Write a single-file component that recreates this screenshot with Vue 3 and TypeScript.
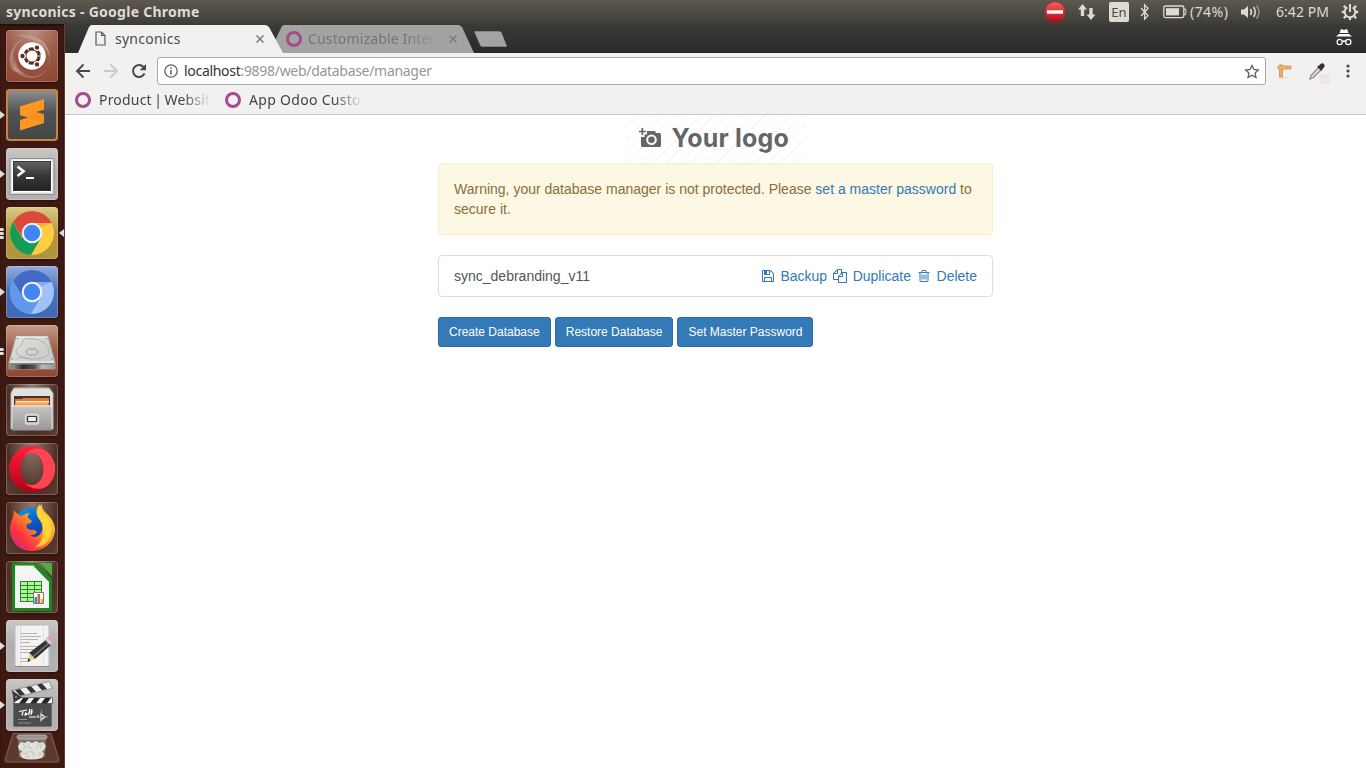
<script setup lang="ts">
interface Launcher {
  id: string
  tone: string
  left: number
  focused?: boolean
}

const launchers: Launcher[] = [
  { id: 'dash', tone: 'rust', left: 0 },
  { id: 'sublime', tone: 'slate', left: 1 },
  { id: 'terminal', tone: 'silver', left: 1 },
  { id: 'chrome', tone: 'gold', left: 3, focused: true },
  { id: 'chromium', tone: 'blue', left: 1 },
  { id: 'disk', tone: 'copper', left: 2 },
  { id: 'files', tone: 'brown', left: 0 },
  { id: 'opera', tone: 'brown', left: 0 },
  { id: 'firefox', tone: 'brown', left: 0 },
  { id: 'calc', tone: 'brown', left: 0 },
  { id: 'editor', tone: 'silver', left: 1 },
  { id: 'video', tone: 'silver', left: 1 },
]

const buttons: string[] = ['Create Database', 'Restore Database', 'Set Master Password']

const actions = [
  {
    label: 'Backup',
    path: 'M512 1536h768v-384h-768v384zm896 0h128v-896q0-14-10-38.5t-20-34.5l-281-281q-10-10-34-20t-39-10v416q0 40-28 68t-68 28h-576q-40 0-68-28t-28-68v-416h-128v1280h128v-416q0-40 28-68t68-28h832q40 0 68 28t28 68v416zm-384-928v-320q0-13-9.5-22.5t-22.5-9.5h-192q-13 0-22.5 9.5t-9.5 22.5v320q0 13 9.5 22.5t22.5 9.5h192q13 0 22.5-9.5t9.5-22.5zm640 32v928q0 40-28 68t-68 28h-1344q-40 0-68-28t-28-68v-1344q0-40 28-68t68-28h928q40 0 88 20t76 48l280 280q28 28 48 76t20 88z',
  },
  {
    label: 'Duplicate',
    path: 'M1696 384q40 0 68 28t28 68v1216q0 40-28 68t-68 28h-960q-40 0-68-28t-28-68v-288h-544q-40 0-68-28t-28-68v-672q0-40 20-88t48-76l408-408q28-28 76-48t88-20h416q40 0 68 28t28 68v328q68-40 128-40h416zm-544 213l-299 299h299v-299zm-640-384l-299 299h299v-299zm196 647l316-316v-416h-384v416q0 40-28 68t-68 28h-416v640h512v-256q0-40 20-88t48-76zm956 804v-1152h-384v416q0 40-28 68t-68 28h-416v640h896z',
  },
  {
    label: 'Delete',
    path: 'M704 736v576q0 14-9 23t-23 9h-64q-14 0-23-9t-9-23v-576q0-14 9-23t23-9h64q14 0 23 9t9 23zm256 0v576q0 14-9 23t-23 9h-64q-14 0-23-9t-9-23v-576q0-14 9-23t23-9h64q14 0 23 9t9 23zm256 0v576q0 14-9 23t-23 9h-64q-14 0-23-9t-9-23v-576q0-14 9-23t23-9h64q14 0 23 9t9 23zm128 724v-948h-896v948q0 22 7 40.5t14.5 27 10.5 8.5h832q3 0 10.5-8.5t14.5-27 7-40.5zm-672-1076h448l-48-117q-7-9-17-11h-317q-10 2-17 11zm928 32v64q0 14-9 23t-23 9h-96v948q0 83-47 143.5t-113 60.5h-832q-66 0-113-58.5t-47-141.5v-952h-96q-14 0-23-9t-9-23v-64q0-14 9-23t23-9h309l70-167q15-37 54-63t79-26h320q40 0 79 26t54 63l70 167h309q14 0 23 9t9 23z',
  },
]
</script>

<template>
  <div class="desktop">
    <header class="panel">
      <span class="panel-title">synconics - Google Chrome</span>
      <div class="tray">
        <svg class="t-stop" width="22" height="22" viewBox="0 0 22 22">
          <defs><linearGradient id="stopg" x1="0" y1="0" x2="0" y2="1"><stop offset="0" stop-color="#ef6a5c" /><stop offset=".5" stop-color="#d93035" /><stop offset="1" stop-color="#ad0a16" /></linearGradient></defs>
          <circle cx="11" cy="11" r="10.3" fill="url(#stopg)" stroke="#a5222a" stroke-width=".7" />
          <rect x="3" y="9.3" width="16" height="3.4" fill="#fff" />
        </svg>
        <svg class="t-net" width="18" height="18" viewBox="0 0 18 18" fill="#dfdbd2"><path d="M0 6.500 4.500 1 9 6.500H6.200V13H2.800V6.500zM8.500 11.500h2.800V5h3.400v6.500h2.800L13 17z" /></svg>
        <span class="t-lang">En</span>
        <svg class="t-bt" width="10" height="18" viewBox="0 0 10 18" fill="none" stroke="#dfdbd2" stroke-width="1.300"><path d="M1 5l7 7.500-3.400 3.600V1.900L8 5.200 1 13" /></svg>
        <svg class="t-bat" width="24" height="14" viewBox="0 0 24 14"><rect x=".8" y="1" width="20" height="11.600" rx="1.500" fill="none" stroke="#dfdbd2" stroke-width="1.300" /><rect x="3" y="3.200" width="13" height="7.200" fill="#dfdbd2" /><path d="M21 4h1.800v5.600H21" fill="none" stroke="#dfdbd2" /></svg>
        <span class="t-pct">(74%)</span>
        <svg class="t-vol" width="20" height="18" viewBox="0 0 20 18" fill="none" stroke="#dfdbd2" stroke-width="1.500"><path d="M0 6.500h3L7 3v12l-4-3.500H0z" fill="#dfdbd2" stroke="none" /><path d="M9.500 6q2 3 0 6M12.500 4q3.500 5 0 10" /><path d="M15.500 2.200q5 6.800 0 13.600" stroke="#96938b" /></svg>
        <span class="t-time">6:42 PM</span>
        <svg class="t-gear" width="18" height="18" viewBox="0 0 18 18" fill="none" stroke="#dfdbd2" stroke-width="2"><path d="M6.300 4.400a5.300 5.300 0 1 0 5.400 0M9 1v8" /><path d="M2.800 2.800 5 5M.8 9h2.500M2.800 15.200 5 13M9 17v-2.700M15.200 15.200 13 13M17.200 9h-2.500M15.200 2.800 13 5" stroke-width="2.300" /></svg>
      </div>
    </header>

    <div class="workspace">
      <nav class="dock">
        <div v-for="app in launchers" :key="app.id" class="tile" :class="app.tone">
          <div v-if="app.left" class="pips" :class="{ arrow: app.left === 1 }"><i v-for="n in app.left" :key="n"></i></div>
          <i v-if="app.focused" class="focus"></i>

          <svg v-if="app.id === 'dash'" width="52" height="52" viewBox="0 0 52 52">
            <path d="M26 9A20 20 0 0 1 42 37 19 19 0 0 0 26 9M7 41A22 22 0 0 1 17 9 20 20 0 0 0 18 44" fill="#fff" opacity=".25" />
            <path d="M10 5Q43 2 44 29 39 11 10 5M9 24Q9 43 28 47 15 50 8 39ZM42 39Q31 53 17 46 32 49 42 39" fill="#fff" opacity=".18" />
            <circle cx="26" cy="27" r="14.500" fill="#7b3b28" opacity=".35" /><circle cx="26" cy="26" r="13.800" fill="#fff" />
            <circle cx="26" cy="26" r="7.200" fill="none" stroke="#5e3022" stroke-width="3.200" />
            <g stroke="#fff" stroke-width="1.200"><g fill="#5e3022"><circle cx="16.500" cy="26" r="2.800" /><circle cx="31" cy="17.600" r="2.800" /><circle cx="31" cy="34.400" r="2.800" /></g><path d="M32.500 26h4M22.800 20.400l-2-3.500M22.800 31.600l-2 3.500" /></g>
          </svg>

          <svg v-else-if="app.id === 'sublime'" width="52" height="52" viewBox="0 0 52 52">
            <path d="M14 17.500 38 10v10.500L30 23l8 2.300V34l-24 7.500V31l8-2.500-8-2.300z" fill="#ff9722" /><path d="m22 28.500 8-5.500 8 2.300V34z" fill="#ed8518" opacity=".45" />
          </svg>

          <svg v-else-if="app.id === 'terminal'" width="52" height="52" viewBox="0 0 52 52">
            <defs><linearGradient id="term" x1="0" y1="0" x2="0" y2="1"><stop offset="0" stop-color="#636462" /><stop offset=".45" stop-color="#393a39" /><stop offset="1" stop-color="#202120" /></linearGradient></defs>
            <rect x="4" y="10.500" width="44" height="36" rx="1.500" fill="#d9d9d9" stroke="#8c8c8c" /><rect x="5.500" y="11.500" width="41" height="33" fill="#fff" /><rect x="7.500" y="13.500" width="37" height="29" fill="url(#term)" stroke="#333" />
            <path d="m11.500 18.500 6 4.800-6 4.700" fill="none" stroke="#fff" stroke-width="2.600" /><path d="M20 30h8" stroke="#fff" stroke-width="2" />
          </svg>

          <svg v-else-if="app.id === 'chrome'" width="52" height="52" viewBox="0 0 52 52">
            <circle cx="26" cy="26" r="22" fill="#ffcd41" /><path d="M45.700 16A22 22 0 0 0 7 15l10 17 9-16z" fill="#dc4a3e" /><path d="M7 15a22 22 0 0 0 18 33l10-17H16z" fill="#119c57" /><path d="M26 16h20l-10 4z" fill="#b98b21" opacity=".35" />
            <circle cx="26" cy="26" r="10.300" fill="#f2f2f2" /><circle cx="26" cy="26" r="8.200" fill="#4285f4" />
          </svg>

          <svg v-else-if="app.id === 'chromium'" width="52" height="52" viewBox="0 0 52 52">
            <circle cx="26" cy="26" r="22" fill="#a2c1f8" /><path d="M45.700 16A22 22 0 0 0 7 15l10 17 9-16z" fill="#426bc6" /><path d="M7 15a22 22 0 0 0 18 33l10-17H16z" fill="#6297ee" /><path d="M26 16h20l-10 4z" fill="#5980bf" opacity=".35" />
            <circle cx="26" cy="26" r="10.300" fill="#f4f6fa" /><circle cx="26" cy="26" r="8.200" fill="#4285f4" />
          </svg>

          <svg v-else-if="app.id === 'disk'" width="52" height="52" viewBox="0 0 52 52">
            <defs><linearGradient id="plat" x1="0" y1="0" x2="1" y2="1"><stop offset="0" stop-color="#e2e2e1" /><stop offset="1" stop-color="#c3c3c1" /></linearGradient><linearGradient id="edge"><stop offset="0" stop-color="#777" /><stop offset=".2" stop-color="#2c2c2c" /><stop offset=".5" stop-color="#555" /><stop offset=".7" stop-color="#bbb" /><stop offset="1" stop-color="#999" /></linearGradient></defs>
            <path d="M10 11h32l7 26v7H3v-7z" fill="url(#plat)" stroke="#999" /><path d="M3.500 38h45v6h-45z" fill="#858584" /><path d="M9 39.500h39V44H9z" fill="url(#edge)" /><path d="M4 37h44M10 12h32" stroke="#f8f8f8" />
            <path d="M19 14C32 12 43 18 43 27c0 8-26 10-32 2-3-5 3-7 5-10s0-4 3-5" fill="none" stroke="#b0b0b0" />
            <path d="M10 34q6-3 8-2t8 2" fill="none" stroke="#b5b5b5" />
            <ellipse cx="26" cy="27" rx="6" ry="3.200" fill="#d2d2d2" stroke="#999" /><g fill="#777"><circle cx="11.500" cy="13.500" r=".7" /><circle cx="40.500" cy="13.500" r=".7" /><circle cx="6" cy="34" r=".7" /><circle cx="46" cy="34" r=".7" /></g>
          </svg>

          <svg v-else-if="app.id === 'files'" width="52" height="52" viewBox="0 0 52 52">
            <defs><linearGradient id="cab" x1="0" y1="0" x2="0" y2="1"><stop offset="0" stop-color="#c3c3c3" /><stop offset="1" stop-color="#979797" /></linearGradient></defs>
            <path d="M8 4h35l4 5v36H5V9z" fill="#e0e0e0" stroke="#b5b5b5" /><path d="M8 12h36v12H8z" fill="#3c3632" /><path d="M9 15h7l1-1h26v9H9z" fill="#e37927" /><path d="M10 17h33v1.500H10z" fill="#fff0d8" /><path d="M9 19h33v2H9z" fill="#f4a45b" />
            <path d="M6.500 22.500h39v24h-39z" fill="url(#cab)" /><path d="M6 22h40" stroke="#e8e8e8" stroke-width="1.500" /><rect x="19.500" y="30.500" width="13" height="9.500" rx="2" fill="#bbb" stroke="#dedede" stroke-width="1.300" /><rect x="21.500" y="32.500" width="9" height="5" rx=".7" fill="#f2f2f2" stroke="#3a3a3a" stroke-width="1.200" />
          </svg>

          <svg v-else-if="app.id === 'opera'" width="52" height="52" viewBox="0 0 52 52">
            <defs><linearGradient id="opr" x1="0" y1="0" x2="0" y2="1"><stop offset="0" stop-color="#ff2035" /><stop offset="1" stop-color="#b30018" /></linearGradient></defs>
            <path fill-rule="evenodd" d="M26 3a23 23 0 1 0 0 46 23 23 0 1 0 0-46m0 7c6.500 0 11.500 7 11.500 16S32.500 42 26 42s-11.500-7-11.500-16S19.500 10 26 10" fill="url(#opr)" /><path d="M18.500 12C25 4 35 4 41.300 9c10.500 9 10.500 25 0 34-7 5-17 3-22.800-3C21 41.500 23.500 42 26 42c6.500 0 11.500-7 11.500-16S32.500 10 26 10q-4 0-7.500 2" fill="#ff4552" />
          </svg>

          <svg v-else-if="app.id === 'firefox'" width="52" height="52" viewBox="0 0 52 52">
            <defs><linearGradient id="fox" x1="1" y1="0" x2="0" y2="1"><stop offset="0" stop-color="#fff24a" /><stop offset=".45" stop-color="#ff9124" /><stop offset=".72" stop-color="#ff3142" /><stop offset="1" stop-color="#b52b9d" /></linearGradient><linearGradient id="globe" x1="0" y1="0" x2=".6" y2="1"><stop offset="0" stop-color="#0aa5f5" /><stop offset=".6" stop-color="#0b55c4" /><stop offset="1" stop-color="#223a9a" /></linearGradient></defs>
            <circle cx="25" cy="23" r="17" fill="url(#globe)" />
            <path d="M8 8q3 5 8 6 3-3 8-3-3 2-2 5l4 3q-1 3-5 3-2 5 4 6 3-1 6 2-3 4-8 3 7 5 12-2 4-7-2-16-3-9 3-13-1 5 5 10 7 6 8 15C49 40 38 49 26 49 12 49 4 39 4 27 4 19 7 19 8 8" fill="url(#fox)" /><path d="M34 2q-1 6 5 11 8 8 6 19-4 13-16 13 9-5 8-18-1-7-5-11-4-8 2-14" fill="#ffdc3c" opacity=".85" />
          </svg>

          <svg v-else-if="app.id === 'calc'" width="52" height="52" viewBox="0 0 52 52">
            <path d="M6 2h25l15 16v32H6z" fill="#178b1c" /><path d="M9 4.500h19.500L43 20v27H9z" fill="#f4f4f4" /><path d="M34 2h12v13z" fill="#4ead46" /><path d="M27 4.500h4l13 13.500v4z" fill="#1f8b24" />
            <path d="M14 20h22v21H14z" fill="#159022" /><path d="M15 21h6v3h-6zm7 0h6v3h-6zm7 0h6v3h-6zm-14 4h6v3h-6zm7 0h6v3h-6zm7 0h6v3h-6zm-14 4h6v3h-6zm7 0h6v3h-6zm7 0h6v3h-6zm-14 4h6v3h-6zm7 0h6v3h-6zm-7 4h6v3h-6zm7 0h6v3h-6z" fill="#b8f29e" /><path d="M27.500 31.500h10v11h-10z" fill="#fff" stroke="#777" /><path d="M28.500 36h2.500v6h-2.500z" fill="#2195df" /><path d="M31.500 33h2.500v9h-2.500z" fill="#df642b" /><path d="M34.500 38H37v4h-2.500z" fill="#f2ba2c" />
          </svg>

          <svg v-else-if="app.id === 'editor'" width="52" height="52" viewBox="0 0 52 52">
            <path d="M9 5h34v42H9z" fill="#f3f3f2" stroke="#bbb" /><path d="M9 46.500h34" stroke="#888" /><path d="M14.500 6v40" stroke="#f5c6c4" /><path d="M37.500 6v40M11.500 6v40" stroke="#d8e2f2" /><path d="M15 13.500h16M15 16.500h20M15 19.500h17M15 22.500h9M15 26.500h18M15 29.500h19M15 32.500h13M15 38.500h12M15 41.500h8" stroke="#a2a2a2" stroke-width=".8" />
            <path d="m40 20 5 5-16 14-6-6z" fill="#333" /><path d="m40 21 2.500 2.500-16 13.500" stroke="#777" fill="none" stroke-width="1.500" /><path d="m23.500 33 5.500 6-7 2z" fill="#e8cf78" /><path d="m22.500 38 2 2.500-3 1.500z" fill="#292929" /><path d="m41 17 2-1q4 1 4 5l-2 3z" fill="#e798cb" /><path d="m39 19 2-2 5 6-2 2z" fill="#d0d0d0" />
          </svg>

          <svg v-else width="52" height="52" viewBox="0 0 52 52">
            <path d="M7.500 24h38v22.500q0 1-1 1h-36q-1 0-1-1z" fill="#4b4d4d" stroke="#6f6f6f" /><path d="m5.500 11.500 38-9 2.500 7-37 9z" fill="#eee" stroke="#777" stroke-width=".7" /><path d="m9 11 5-1 5 5.500-5 1.300zm11-2.700 5-1 5 5.500-5 1.300zm11-2.600 5-1.200 5 5.500-5 1.300z" fill="#333" /><path d="M8 18.500h38.500v6H8z" fill="#f4f4f4" stroke="#444" stroke-width=".7" /><path d="M17 19l-4 5.500h6l4-5.500zm11 0-4 5.500h6l4-5.500zm11 0-4 5.500h6l4-5.500z" fill="#252525" /><path d="m6 11 10 7.500-8 5z" fill="#3a3a3a" /><circle cx="10" cy="18" r="1" fill="#999" />
            <path d="M13 32.500l8-1.500m-4 1.500-1 4m4-3-1 2.500q2 0 2-2m3-4-1.500 6m3.500-6L25 36m-2-3h4M23 38h7m2-2v3m3-4v6l4-3z" fill="none" stroke="#fff" stroke-width="1.200" /><path d="M12 40.500h9M12 44h13M35.500 31v12M30 38h12" stroke="#a2a2a2" stroke-width=".8" />
          </svg>
        </div>
        <svg class="trash" width="56" height="30" viewBox="0 0 56 30">
          <path d="M9 .500h38L55 27q0 2-2 2H3q-2 0-2-2z" fill="#5d382b" stroke="#846357" /><path d="M14 5h28l-1 19q-13 4-26 0z" fill="#c5c8c6" opacity=".4" /><rect x="13" y="2" width="30" height="4" rx="2" fill="#95938f" stroke="#c2c3c1" stroke-width=".8" />
          <path d="m14 13 3-4 4 1 3-2 4 2 4-2 3 2 4-1 3 4-2 4-2 1 2 3-2 4q-11 3-20 0l-2-4 2-3-3-1z" fill="#dfe1dd" /><path d="m19 11 3 3-3 2m7-6-2 4 4 2m5-6 2 3-3 3m6-5-2 3 2 2M18 20l4 1 2-3m2 0 4 2-1 3m6-4 2 2-3 2m-12 1 3-1m-9-6 3 1" stroke="#b2b5b0" stroke-width=".7" fill="none" />
        </svg>
      </nav>

      <section class="browser">
        <div class="tabs">
          <div class="tab active">
            <svg width="11" height="15" viewBox="0 0 11 15" fill="none" stroke="#5a5a5a" stroke-width="1.200"><path d="M1 1h5.500L10 4.500V14H1zM6.500 1v3.500H10" /></svg>
            <span class="tab-name">synconics</span>
            <svg class="close" width="8" height="8" viewBox="0 0 8 8"><path d="m.5.5 7 7m0-7-7 7" /></svg>
          </div>
          <div class="tab inactive">
            <i class="ring"></i>
            <span class="tab-name fade">Customizable Interf</span>
            <svg class="close" width="8" height="8" viewBox="0 0 8 8"><path d="m.5.5 7 7m0-7-7 7" /></svg>
          </div>
          <svg class="newtab" width="33" height="16" viewBox="0 0 33 16"><path d="M.7.7h25q1 0 1.500 1l5.300 13.600H8q-1 0-1.500-1z" fill="#a3a3a1" stroke="#bbb" stroke-width=".6" /></svg>
          <svg class="incognito" width="16" height="17" viewBox="0 0 16 17" fill="#fff"><path d="m5 0 3 1 3-1 1.500 4h-9zM3 5h10l3 2.500H0z" /><g fill="none" stroke="#fff" stroke-width="1.200"><circle cx="3.700" cy="13" r="2.600" /><circle cx="12.300" cy="13" r="2.600" /><path d="M6 13q2-2 4 0" /></g></svg>
        </div>

        <div class="toolbar">
          <svg class="nav-icon" width="16" height="16" viewBox="0 0 16 16" fill="none" stroke="#484848" stroke-width="1.900"><path d="M15 8H2.500M8.500 1.500 2 8l6.500 6.500" /></svg>
          <svg class="nav-icon" width="16" height="16" viewBox="0 0 16 16" fill="none" stroke="#cacaca" stroke-width="1.900"><path d="M1 8h12.500M7.500 1.500 14 8l-6.500 6.500" /></svg>
          <svg class="nav-icon" width="16" height="16" viewBox="0 0 16 16"><path d="M13.500 10.500A6 6 0 1 1 12.500 4" fill="none" stroke="#484848" stroke-width="2" /><path d="M15 1v6.300H8.700z" fill="#484848" /></svg>
          <div class="address">
            <svg width="14" height="14" viewBox="0 0 14 14"><circle cx="7" cy="7" r="6.200" fill="none" stroke="#606060" stroke-width="1.300" /><path d="M7 6v4.500M7 3.300v1.500" stroke="#606060" stroke-width="1.500" /></svg>
            <span class="url"><b>localhost</b>:9898/web/database/manager</span>
            <svg class="star" width="16" height="15" viewBox="0 0 16 15"><path d="m8 1.500 1.900 4 4.500.5-3.300 3 .9 4.400L8 11.200l-4 2.200L4.900 9 1.600 6l4.500-.5z" fill="none" stroke="#606060" stroke-width="1.300" /></svg>
          </div>
          <svg class="crane" width="16" height="16" viewBox="0 0 16 16"><path d="M1 15h10" stroke="#dedbd7" /><path d="M2.500 2h3v12h-3z" fill="#e8ad6c" stroke="#cf8b4c" stroke-width=".8" /><path d="M1 3h13v3H1z" fill="#eebb7c" stroke="#d4924d" stroke-width=".8" /><path d="M8 3v3M11 3v3" stroke="#d4924d" stroke-width=".7" /></svg>
          <svg class="picker" width="22" height="22" viewBox="0 0 22 22"><rect x="11" y="12" width="11" height="10" fill="#f1e2ef" /><path d="m10.500 5.500 2.500 2.500-7.500 7.500-3.500 1.500 1-3.500z" fill="#ddd" stroke="#888" stroke-width="1.200" /><path d="m9 4.500 2-1 1.500-1.500q2-1.500 3.500 0t0 3.500L14.500 7l-1 2z" fill="#333" /><circle cx="16" cy="17.500" r=".7" fill="#fff" /></svg>
          <svg class="dots" width="4" height="14" viewBox="0 0 4 14" fill="#484848"><circle cx="2" cy="2" r="1.600" /><circle cx="2" cy="7" r="1.600" /><circle cx="2" cy="12" r="1.600" /></svg>
        </div>

        <div class="bookmarks">
          <i class="ring"></i><span class="bm bm-a">Product | Website</span>
          <i class="ring"></i><span class="bm bm-b">App Odoo Custo</span>
        </div>

        <main class="page">
          <div class="container">
            <div class="logo">
              <svg width="23" height="20" viewBox="0 0 23 20"><path d="M3.300 0v7M0 3.500h6.800" stroke="#666" stroke-width="1.700" /><path fill="#666" fill-rule="evenodd" d="M8 3h8l1 2h3.500q1.500 0 1.500 1.500v11q0 1.500-1.500 1.500h-17Q2 19 2 17.500V9h3.500V6.500H8zm4.500 3.500a5.300 5.300 0 1 0 0 10.600 5.300 5.300 0 1 0 0-10.600m0 2a3.300 3.300 0 1 1 0 6.600 3.300 3.300 0 1 1 0-6.600" /></svg>
              <span>Your logo</span>
            </div>
            <div class="alert">Warning, your database manager is not protected. Please <a>set a master password</a> to secure it.</div>
            <div class="database">
              <span>sync_debranding_v11</span>
              <div class="actions">
                <a v-for="action in actions" :key="action.label"><svg width="14" height="14" viewBox="0 0 1792 1792"><path :d="action.path" fill="currentColor" /></svg>{{ action.label }}</a>
              </div>
            </div>
            <div class="buttons"><button v-for="label in buttons" :key="label">{{ label }}</button></div>
          </div>
        </main>
      </section>
    </div>
  </div>
</template>

<style>
body { margin: 0; overflow: hidden; }
</style>

<style scoped>
* { box-sizing: border-box; }
svg { display: block; flex: none; }
.desktop { width: 1366px; height: 768px; display: flex; flex-direction: column; font-family: "Noto Sans", sans-serif; overflow: hidden; }
.panel { height: 24px; flex: none; display: flex; align-items: center; justify-content: space-between; padding: 0 7px 0 6px; background: linear-gradient(#5c594f, #3e3d38); color: #dfdbd2; font-size: 14px; white-space: nowrap; }
.panel-title { padding-bottom: 2px; font-weight: 700; letter-spacing: .27px; }
.tray { display: flex; align-items: center; height: 24px; }
.t-net { margin-left: 12px; }
.t-lang { width: 20px; height: 20px; margin-left: 13px; border-radius: 2px; background: #dfdbd2; color: #4a4942; text-align: center; font-size: 13px; line-height: 20px; }
.t-bt { margin-left: 11px; }
.t-bat { margin-left: 13px; }
.t-pct { width: 39px; margin-left: 3px; padding-bottom: 2px; letter-spacing: .45px; }
.t-vol { margin-left: 12px; }
.t-time { width: 54px; margin-left: 15px; padding-bottom: 2px; letter-spacing: .05px; }
.t-gear { margin-left: 11px; }
.workspace { display: flex; flex: 1; min-height: 0; }
.dock { width: 65px; flex: none; padding: 6px 0 0 6px; display: flex; flex-direction: column; gap: 7px; background: #3e1a12; border-right: 1px solid #643f35; box-shadow: inset 0 4px 4px -2px #1f0d09; }
.tile { position: relative; width: 52px; height: 52px; flex: none; border-radius: 4px; box-shadow: inset 0 0 0 1px rgba(255,255,255,.2), 0 1px 3px rgba(0,0,0,.35); }
.rust { background: radial-gradient(circle at 50% 0, #bd9085, #9a5a47 50%, #8c4532); }
.slate { background: linear-gradient(#909396, #505355 45%, #424446); box-shadow: inset 0 0 0 2px #c28442; }
.silver { background: linear-gradient(#c9c6c6, #b0adae 50%, #b5b1b3); }
.gold { background: linear-gradient(#dacb88, #b2973e 50%, #af963d); }
.blue { background: linear-gradient(#94ace0, #4670bb 50%, #4069b3); }
.copper { background: linear-gradient(#c69b87, #9c5a43 50%, #8c4834); }
.brown { background: radial-gradient(ellipse at 50% 0, #917a70, #56382c 60%, #4c3025 65%, #5d4036); }
.pips { position: absolute; left: -6px; top: 19px; height: 14px; display: flex; flex-direction: column; justify-content: center; gap: 1px; }
.pips i { width: 4px; height: 3px; border-radius: 0 2px 2px 0; background: #ddd; }
.pips.arrow i { width: 0; height: 0; background: none; border: 4px solid transparent; border-left: 5px solid #ddd; border-right: 0; border-radius: 0; }
.focus { position: absolute; right: -6px; top: 22px; border: 4px solid transparent; border-right: 5px solid #ddd; border-left: 0; }
.trash { margin: -5px 0 0 -2px; }
.browser { flex: 1; min-width: 0; display: flex; flex-direction: column; }
.tabs { height: 29px; flex: none; display: flex; align-items: flex-end; background: linear-gradient(#3b3a38, #2a2a29); }
.tab { height: 28px; display: flex; align-items: center; font-size: 14px; white-space: nowrap; }
.active { width: 205px; margin-left: 13px; padding: 0 19px 1px 17px; background: #f2f1f0; clip-path: polygon(0 100%, 11px 2px, 13px 0, 188px 0, 191px 2px, 205px 100%); z-index: 1; color: #4c4c4c; }
.inactive { width: 199px; margin-left: -8px; padding: 0 17px 1px 11px; background: #a3a3a1; clip-path: polygon(0 55%, 7px 1px, 9px 0, 184px 0, 187px 2px, 199px 100%, 6px 100%); color: #747472; }
.tab-name { margin-left: 9px; letter-spacing: .25px; }
.inactive .tab-name { width: 131px; margin-left: 6px; overflow: hidden; letter-spacing: .15px; }
.fade, .bm { mask-image: linear-gradient(90deg, #000 75%, transparent); }
.close { margin-left: auto; fill: none; stroke: #7a7a79; stroke-width: 1.5; }
.ring { width: 16px; height: 16px; flex: none; border: 3.5px solid #a34b8d; border-radius: 50%; }
.newtab { margin: 0 0 6px; }
.incognito { margin: 0 14px 7px auto; }
.toolbar { height: 35px; flex: none; display: flex; align-items: center; padding: 1px 16px 0 10px; background: #f2f1f0; }
.nav-icon { margin-right: 12px; }
.address { flex: none; display: flex; align-items: center; width: 1109px; height: 28px; margin-left: -2px; padding: 0 5px 0 6px; border: 1px solid #aaa; border-radius: 3px; background: #fff; }
.url { margin-left: 6px; padding-bottom: 2px; color: #969696; font-size: 14px; letter-spacing: -.3px; }
.url b { color: #333; font-weight: 400; }
.star { margin-left: auto; }
.crane { margin-left: 11px; }
.picker { margin: 4px 0 0 15px; }
.dots { margin-left: 16px; }
.bookmarks { height: 27px; flex: none; display: flex; align-items: center; padding: 0 10px 3px; background: #f2f1f0; border-bottom: 1px solid #c9c8c7; }
.bm { width: 112px; margin-left: 8px; padding-bottom: 1px; overflow: hidden; white-space: nowrap; font-size: 14px; color: #444; }
.bm-a { margin-right: 14px; word-spacing: -1.5px; letter-spacing: .2px; }
.bm-b { width: 114px; letter-spacing: .3px; }
.page { flex: 1; background: #fff; font-family: "Liberation Sans", Arial, sans-serif; font-size: 14px; line-height: 20px; color: #333; }
.container { width: 555px; margin-left: 373px; }
.logo { width: 180px; height: 48px; margin: 0 auto; padding: 0 0 2px 13px; display: flex; align-items: center; background: repeating-linear-gradient(135deg, #fff 0 7.5px, #f8f8f8 7.5px 9px); color: #666; font: 700 25px/40px Inter, sans-serif; white-space: nowrap; }
.logo svg { margin-bottom: 1px; }
.logo span { margin-left: 10px; letter-spacing: .2px; }
.alert { height: 72px; padding: 15px; border: 1px solid #faebcc; border-radius: 4px; background: #fcf8e3; color: #8a6d3b; }
a { color: #337ab7; text-decoration: none; }
.database { display: flex; justify-content: space-between; align-items: center; height: 42px; margin-top: 20px; padding: 0 15px; border: 1px solid #ddd; border-radius: 4px; color: #555; }
.actions { display: flex; gap: 6px; }
.actions a { display: flex; align-items: center; gap: 5.5px; }
.buttons { display: flex; gap: 4px; margin-top: 20px; }
button { height: 30px; padding: 5px 10px; border: 1px solid #2e6da4; border-radius: 3px; background: #337ab7; color: #fff; font: 12px/18px "Liberation Sans", Arial, sans-serif; }
button:last-child { padding-right: 9.5px; }
</style>
